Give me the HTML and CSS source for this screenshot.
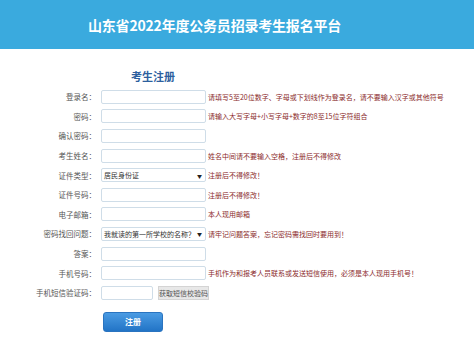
FILE: index.html
```html
<!DOCTYPE html>
<html lang="zh-CN">
<head>
  <meta charset="UTF-8">
  <title>山东省2022年度公务员招录考生报名平台</title>
  <link rel="stylesheet" href="styles.css">
</head>
<body>
  <div class="header">
    <h1 class="site-title">山东省2022年度公务员招录考生报名平台</h1>
  </div>

  <div class="register">
    <h3 class="reg-title">考生注册</h3>

    <div class="row">
      <label class="label">登录名：</label>
      <input class="field" type="text">
      <span class="hint">请填写5至20位数字、字母或下划线作为登录名，请不要输入汉字或其他符号</span>
    </div>
    <div class="row">
      <label class="label">密码：</label>
      <input class="field" type="password">
      <span class="hint">请输入大写字母+小写字母+数字的8至15位字符组合</span>
    </div>
    <div class="row">
      <label class="label">确认密码：</label>
      <input class="field" type="password">
      <span class="hint"></span>
    </div>
    <div class="row">
      <label class="label">考生姓名：</label>
      <input class="field" type="text">
      <span class="hint">姓名中间请不要输入空格，注册后不得修改</span>
    </div>
    <div class="row">
      <label class="label">证件类型：</label>
      <div class="field select"><span>居民身份证</span><span class="arrow">▼</span></div>
      <span class="hint">注册后不得修改！</span>
    </div>
    <div class="row">
      <label class="label">证件号码：</label>
      <input class="field" type="text">
      <span class="hint">注册后不得修改！</span>
    </div>
    <div class="row">
      <label class="label">电子邮箱：</label>
      <input class="field" type="text">
      <span class="hint">本人现用邮箱</span>
    </div>
    <div class="row">
      <label class="label">密码找回问题：</label>
      <div class="field select"><span>我就读的第一所学校的名称？</span><span class="arrow">▼</span></div>
      <span class="hint">请牢记问题答案，忘记密码需找回时要用到！</span>
    </div>
    <div class="row">
      <label class="label">答案：</label>
      <input class="field" type="text">
      <span class="hint"></span>
    </div>
    <div class="row">
      <label class="label">手机号码：</label>
      <input class="field" type="text">
      <span class="hint">手机作为和报考人员联系或发送短信使用，必须是本人现用手机号！</span>
    </div>
    <div class="row">
      <label class="label">手机短信验证码：</label>
      <div class="code-group">
        <input class="field code" type="text">
        <button class="code-btn" type="button">获取短信校验码</button>
      </div>
      <span class="hint"></span>
    </div>

    <button class="submit" type="button">注册</button>
  </div>
</body>
</html>
```

FILE: styles.css
```css
body {
  margin: 0;
  font-family: "Noto Sans CJK SC", "Noto Sans", sans-serif;
  background: #fff;
  color: #333;
}

.header {
  height: 49px;
  background: #3aaade;
  display: flex;
  align-items: center;
  padding-left: 88px;
}

.site-title {
  margin: 0;
  font-size: 14px;
  font-weight: 700;
  color: #fff;
  line-height: 14px;
  letter-spacing: -0.2px;
}

.register {
  padding-top: 20px;
}

.reg-title {
  margin: 0 0 4px 131px;
  font-size: 11px;
  line-height: 14px;
  font-weight: 700;
  color: #2d5f9e;
}

.row {
  display: grid;
  grid-template-columns: 96px 105px 1fr;
  column-gap: 5px;
  align-items: center;
  height: 19.6px;
}

.label {
  text-align: right;
  font-size: 7.5px;
  color: #555;
  white-space: nowrap;
}

.field {
  box-sizing: border-box;
  height: 14px;
  width: 105px;
  margin: 0;
  padding: 0 2px;
  border: 1px solid #cfdde8;
  border-radius: 2px;
  background: #fff;
  font-family: inherit;
  font-size: 7px;
  outline: none;
}

.select {
  display: flex;
  align-items: center;
  justify-content: space-between;
  color: #333;
  white-space: nowrap;
  overflow: hidden;
}

.arrow {
  font-size: 5px;
  color: #222;
  padding-right: 1px;
}

.hint {
  font-size: 7px;
  color: #8b2b2b;
  white-space: nowrap;
  margin-left: -3px;
}

.code-group {
  display: flex;
  align-items: center;
  gap: 5px;
}

.code {
  width: 52px;
}

.code-btn {
  box-sizing: border-box;
  height: 14px;
  width: 52px;
  padding: 0;
  border: 1px solid #d4d4d4;
  background: #e8e8e8;
  color: #555;
  font-family: inherit;
  font-size: 7px;
  white-space: nowrap;
}

.submit {
  display: block;
  margin: 9px 0 0 103px;
  width: 60px;
  height: 20px;
  border: 1px solid #2a74c0;
  border-radius: 3px;
  background: linear-gradient(#4a9be3, #2274c6);
  color: #fff;
  font-family: inherit;
  font-size: 8px;
  font-weight: 700;
}
```
